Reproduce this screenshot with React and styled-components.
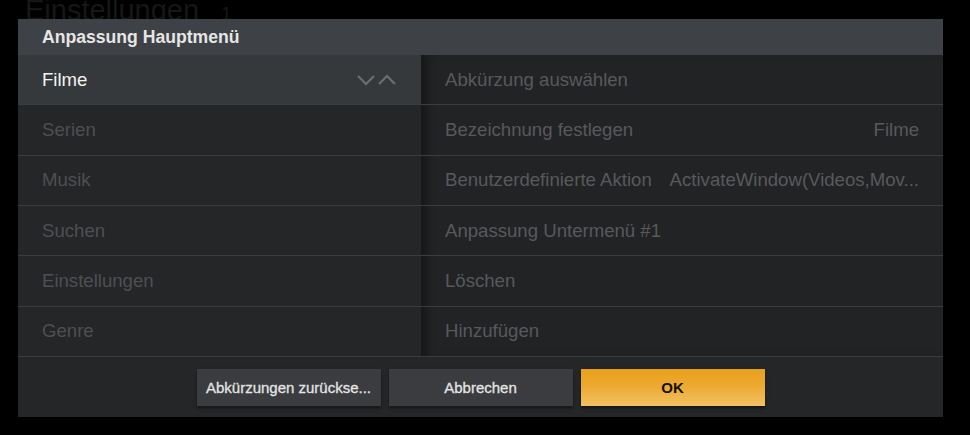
import React from "react";
import styled, { createGlobalStyle } from "styled-components";

const Global = createGlobalStyle`
  html, body { margin: 0; padding: 0; background: #000; }
  body { font-family: "Liberation Sans", Arial, sans-serif; width: 970px; height: 435px; overflow: hidden; }
`;

const Page = styled.div`
  position: relative;
  display: flow-root;
  width: 970px;
  height: 435px;
  background: #000;
`;

const BackTitle = styled.div`
  display: flex;
  align-items: baseline;
  gap: 22px;
  padding: 0 0 0 25px;
  margin-top: -6px;
  color: #171717;
  font-size: 29px;
  line-height: 32px;
`;

const BackCount = styled.span`
  font-size: 18px;
`;

const Dialog = styled.div`
  position: absolute;
  left: 18px;
  top: 19px;
  width: 925px;
  height: 398px;
  display: flex;
  flex-direction: column;
  background: #252628;
`;

const Header = styled.div`
  height: 36px;
  flex: none;
  display: flex;
  align-items: center;
  padding-left: 24px;
  background: #3e4145;
  color: #e6e6e6;
  font-weight: bold;
  font-size: 17.6px;
`;

const Body = styled.div`
  height: 302px;
  flex: none;
  display: grid;
  grid-template-columns: 403px 522px;
`;

const Column = styled.div`
  display: flex;
  flex-direction: column;
  background: ${(p) => (p.$side === "right" ? "#222325" : "#252628")};
  box-shadow: ${(p) =>
    p.$side === "right" ? "inset 10px 0 10px -4px rgba(0,0,0,0.35)" : "none"};
`;

const Row = styled.div`
  flex: 1;
  display: flex;
  align-items: center;
  justify-content: space-between;
  padding: 0 24px;
  border-bottom: 1px solid #3b3c3f;
  background: ${(p) => (p.$focused ? "#36393c" : "transparent")};
  color: ${(p) => (p.$focused ? "#f2f2f2" : p.$side === "right" ? "#58595c" : "#4e4f52")};
  font-size: 18.6px;
  white-space: nowrap;
`;

const Value = styled.span`
  color: #58595c;
`;

const Chevrons = styled.svg`
  width: 40px;
  height: 12px;
`;

const Footer = styled.div`
  flex: 1;
  display: flex;
  justify-content: center;
  align-items: flex-start;
  gap: 8px;
  padding-top: 12px;
`;

const Button = styled.button`
  width: 184px;
  height: 37px;
  border: none;
  font-family: "Liberation Sans", Arial, sans-serif;
  font-size: 15px;
  font-weight: ${(p) => (p.$primary ? "bold" : "normal")};
  -webkit-text-stroke: ${(p) => (p.$primary ? "0" : "0.3px")};
  color: ${(p) => (p.$primary ? "#111" : "#e4e4e4")};
  background: ${(p) =>
    p.$primary ? "linear-gradient(#e9a01b, #eca930 45%, #f2c263)" : "#3a3c3f"};
  box-shadow: 0 2px 3px rgba(0, 0, 0, 0.45);
  padding: 0;
`;

const left = ["Filme", "Serien", "Musik", "Suchen", "Einstellungen", "Genre"];
const right = [
  ["Abkürzung auswählen", ""],
  ["Bezeichnung festlegen", "Filme"],
  ["Benutzerdefinierte Aktion", "ActivateWindow(Videos,Mov..."],
  ["Anpassung Untermenü #1", ""],
  ["Löschen", ""],
  ["Hinzufügen", ""],
];

export default function App() {
  return (
    <Page>
      <Global />
      <BackTitle>
        Einstellungen <BackCount>1</BackCount>
      </BackTitle>
      <Dialog>
        <Header>Anpassung Hauptmenü</Header>
        <Body>
          <Column>
            {left.map((l, i) => (
              <Row key={l} $focused={i === 0}>
                {l}
                {i === 0 && (
                  <Chevrons viewBox="0 0 40 12">
                    <path d="M1 2 L9 10 L17 2" fill="none" stroke="#6b6d70" strokeWidth="2.2" />
                    <path d="M22 10 L30 2 L38 10" fill="none" stroke="#6b6d70" strokeWidth="2.2" />
                  </Chevrons>
                )}
              </Row>
            ))}
          </Column>
          <Column $side="right">
            {right.map(([l, v]) => (
              <Row key={l} $side="right">
                {l}
                {v && <Value>{v}</Value>}
              </Row>
            ))}
          </Column>
        </Body>
        <Footer>
          <Button>Abkürzungen zurückse...</Button>
          <Button>Abbrechen</Button>
          <Button $primary>OK</Button>
        </Footer>
      </Dialog>
    </Page>
  );
}
